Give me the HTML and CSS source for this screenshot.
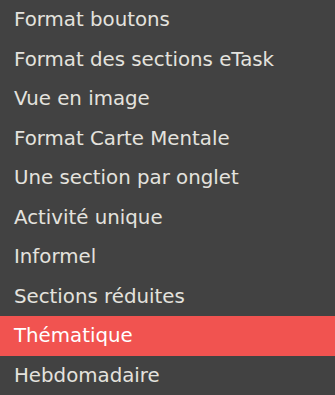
FILE: index.html
```html
<!DOCTYPE html>
<html>
<head>
    <meta charset="utf-8">
    <meta name="viewport" content="width=device-width, initial-scale=1">
    <title>Format de cours</title>
    <link rel="stylesheet" href="styles.css">
</head>
<body>
    <ul class="menu">
        <li class="menuItem">Format boutons</li>
        <li class="menuItem">Format des sections eTask</li>
        <li class="menuItem">Vue en image</li>
        <li class="menuItem">Format Carte Mentale</li>
        <li class="menuItem">Une section par onglet</li>
        <li class="menuItem">Activité unique</li>
        <li class="menuItem">Informel</li>
        <li class="menuItem">Sections réduites</li>
        <li class="menuItem selected">Thématique</li>
        <li class="menuItem">Hebdomadaire</li>
    </ul>
</body>
</html>
```

FILE: styles.css
```css
html, body {
    margin: 0;
    height: 100%;
    background-color: #424242;
}

.menu {
    list-style: none;
    margin: 0;
    padding: 0;
    font-family: "DejaVu Sans", sans-serif;
    font-size: 19.8px;
    color: #e4e2de;
}

.menuItem {
    height: 39.5px;
    line-height: 39.5px;
    padding-left: 14px;
    white-space: nowrap;
}

.selected {
    background-color: #f15350;
    color: #ffffff;
}
```
